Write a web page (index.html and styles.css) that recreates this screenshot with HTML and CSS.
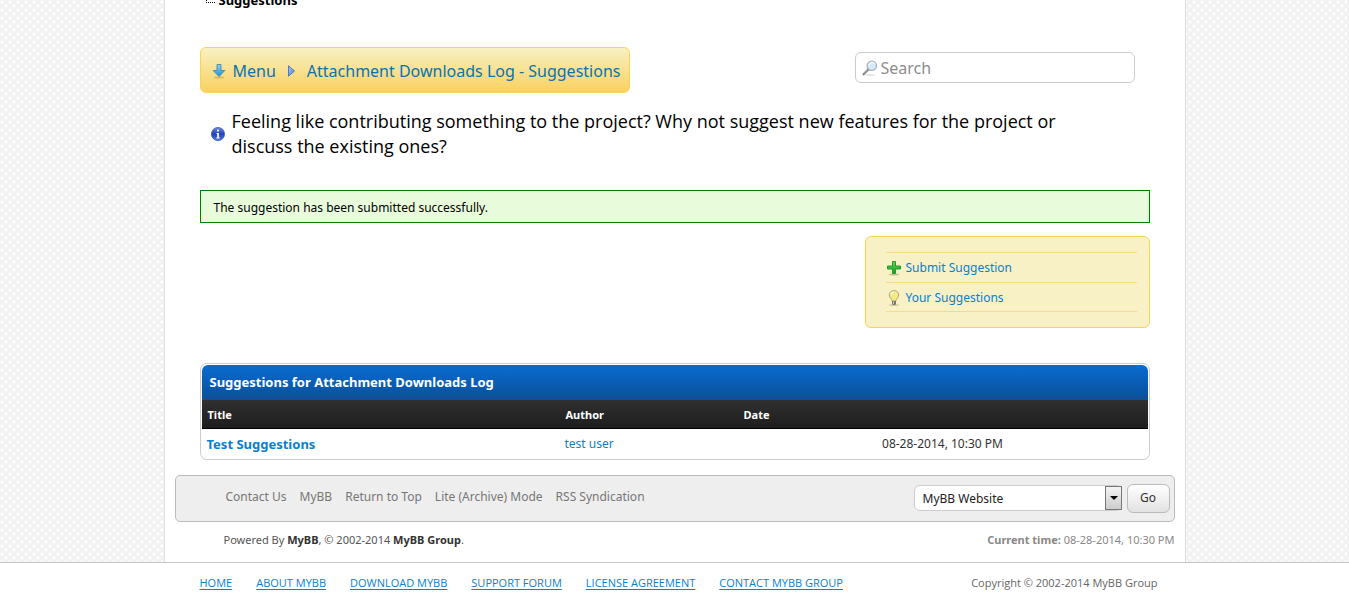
FILE: index.html
```html
<!DOCTYPE html>
<html lang="en">
<head>
<meta charset="utf-8">
<meta name="viewport" content="width=device-width, initial-scale=1">
<title>Attachment Downloads Log - Suggestions</title>
<link rel="stylesheet" href="styles.css">
</head>
<body>
<div class="backdrop">
  <div class="page">
    <main class="content">
      <div class="trail"><span class="trail-tick"></span><strong>Suggestions</strong></div>

      <div class="toolbar">
        <nav class="crumbs" aria-label="Project">
          <a class="crumb" href="#">
            <svg class="crumb-arrow" viewBox="0 0 14 16" aria-hidden="true">
              <defs><linearGradient id="down" x1="0" y1="0" x2="0" y2="1"><stop offset="0" stop-color="#8fd3f0"/><stop offset="1" stop-color="#1593e6"/></linearGradient></defs>
              <ellipse cx="7" cy="14.500" rx="5" ry="1" fill="#b98f36" opacity=".5"/>
              <path d="M5 1.500h4v6h3.800L7 13.500 1.200 7.500H5z" fill="url(#down)" stroke="#4787ad" stroke-width=".9"/>
            </svg>
            Menu</a>
          <svg class="crumb-sep" viewBox="0 0 8 12" aria-hidden="true">
            <defs><linearGradient id="next" x1="0" y1="0" x2="1" y2="1"><stop offset="0" stop-color="#b9cdf0"/><stop offset="1" stop-color="#3f78dd"/></linearGradient></defs>
            <path d="M1 .8 7 6 1 11.200z" fill="url(#next)" stroke="#5377bd"/>
          </svg>
          <a class="crumb" href="#">Attachment Downloads Log - Suggestions</a>
        </nav>
        <form class="search">
          <svg class="search-icon" viewBox="0 0 16 16" aria-hidden="true">
            <ellipse cx="8" cy="15" rx="6" ry=".8" fill="#ddd"/>
            <path d="M6.200 9.500 1.500 14.200" stroke="#777" stroke-width="2" stroke-linecap="round"/>
            <path d="M5.800 9.500 1.800 13.500" stroke="#ccc" stroke-width=".8"/>
            <circle cx="9.800" cy="5.700" r="4.700" fill="#d8eafa" stroke="#a6aeb5" stroke-width="1.200"/>
            <path d="M7 5.500a3 3 0 0 1 5-2" fill="none" stroke="#fff"/>
          </svg>
          <input class="search-input" type="search" placeholder="Search" aria-label="Search">
        </form>
      </div>

      <div class="intro">
        <svg class="intro-icon" viewBox="0 0 16 16" aria-hidden="true">
          <defs><linearGradient id="info" x1="0" y1="0" x2="0" y2="1"><stop offset="0" stop-color="#6c8ae4"/><stop offset=".5" stop-color="#2342bb"/><stop offset="1" stop-color="#4f7be6"/></linearGradient></defs>
          <circle cx="8" cy="8" r="6.600" fill="url(#info)" stroke="#4a60b8" stroke-width=".8"/>
          <circle cx="8" cy="4.600" r="1.100" fill="#fff"/>
          <path d="M6.500 7h2.400v4.500h.8v1H6.400v-1h.8V8h-.7z" fill="#fff"/>
        </svg>
        <p class="intro-text">Feeling like contributing something to the project? Why not suggest new features for the project or discuss the existing ones?</p>
      </div>

      <div class="notice" role="status">The suggestion has been submitted successfully.</div>

      <ul class="actions">
        <li class="action">
          <svg class="action-icon" viewBox="0 0 16 16" aria-hidden="true">
            <defs><linearGradient id="plus" x1="0" y1="0" x2="0" y2="1"><stop offset="0" stop-color="#5fda5b"/><stop offset="1" stop-color="#169c24"/></linearGradient></defs>
            <ellipse cx="8" cy="14.500" rx="5" ry="1" fill="#c4bd94"/>
            <path d="M6.500 1.500h3v4.500h5v3h-5v4.500h-3V9h-5V6h5z" fill="url(#plus)" stroke="#219a2b"/>
          </svg>
          <a class="link" href="#">Submit Suggestion</a>
        </li>
        <li class="action">
          <svg class="action-icon" viewBox="0 0 16 16" aria-hidden="true">
            <ellipse cx="8" cy="15" rx="5" ry=".8" fill="#c4bd94"/>
            <path d="M6.200 11C6 8.800 3.300 7.800 3.300 4.900a4.700 4.300 0 0 1 9.400 0C12.700 7.800 10 8.800 9.800 11z" fill="#f3ec86" stroke="#b7a077"/>
            <path d="M5 4.500C5.200 3 6.300 2 8 2" fill="none" stroke="#fff" stroke-width="1.200"/>
            <path d="M6 11h4v3L9 15H7l-1-1z" fill="#777"/><path d="M7 11.500h1V14H7z" fill="#ccc"/>
          </svg>
          <a class="link" href="#">Your Suggestions</a>
        </li>
      </ul>

      <div class="panel">
        <table class="list">
          <caption class="list-title">Suggestions for Attachment Downloads Log</caption>
          <thead>
            <tr><th class="col-title" scope="col">Title</th><th class="col-author" scope="col">Author</th><th scope="col">Date</th></tr>
          </thead>
          <tbody>
            <tr><td><a class="link link-strong" href="#">Test Suggestions</a></td><td><a class="link" href="#">test user</a></td><td class="date">08-28-2014, 10:30 PM</td></tr>
          </tbody>
        </table>
      </div>
    </main>

    <footer class="board-footer">
      <div class="footbar">
        <nav class="foot-links" aria-label="Board">
          <a href="#">Contact Us</a><a href="#">MyBB</a><a href="#">Return to Top</a><a href="#">Lite (Archive) Mode</a><a href="#">RSS Syndication</a>
        </nav>
        <form class="theme">
          <span class="select-box">
            <select class="theme-select" aria-label="Theme"><option>MyBB Website</option></select>
            <span class="select-arrow"></span>
          </span>
          <button class="go" type="button">Go</button>
        </form>
      </div>
      <div class="meta">
        <span>Powered By <strong>MyBB</strong>, © 2002-2014 <strong>MyBB Group</strong>.</span>
        <span class="clock"><strong>Current time:</strong> 08-28-2014, 10:30 PM</span>
      </div>
    </footer>
  </div>
</div>
<footer class="site-footer">
  <div class="site-inner">
    <nav class="site-links" aria-label="Site">
      <a href="#">HOME</a><a href="#">ABOUT MYBB</a><a href="#">DOWNLOAD MYBB</a><a href="#">SUPPORT FORUM</a><a href="#">LICENSE AGREEMENT</a><a href="#">CONTACT MYBB GROUP</a>
    </nav>
    <span>Copyright © 2002-2014 MyBB Group</span>
  </div>
</footer>
</body>
</html>
```

FILE: styles.css
```css
* { box-sizing: border-box; }

body {
  margin: 0;
  background: #fff;
  color: #333;
  font: 12px/18px Tahoma, "Noto Sans", sans-serif;
}

.backdrop {
  background-color: #f2f2f2;
  background-image:
    radial-gradient(circle at 2px 2px, #fff 1px, transparent 2px),
    radial-gradient(circle at 6px 6px, #fff 1px, transparent 2px);
  background-size: 8px 8px;
  border-bottom: 1px solid #c6c6c6;
}

.page {
  max-width: 1022px;
  margin: 0 auto;
  padding: 0 10px 13px;
  background: #fff;
  border: solid #dcdcdc;
  border-width: 0 1px;
}

.content { padding: 0 25px; }

.link { color: #0a7fcf; text-decoration: none; }
.link-strong { font-size: 13px; font-weight: bold; }

.trail {
  display: flex;
  gap: 4px;
  height: 47px;
  padding-left: 6px;
  color: #000;
  font-size: 13px;
  line-height: 0;
}
.trail-tick { width: 9px; height: 3px; border: dotted #000; border-width: 0 0 1px 1px; }

.toolbar {
  display: flex;
  align-items: center;
  justify-content: space-between;
  padding-right: 15px;
}
.crumbs {
  display: flex;
  align-items: center;
  gap: 11px;
  height: 46px;
  padding: 2px 9px 0 11px;
  border: 1px solid #fbd15e;
  border-radius: 6px;
  background: linear-gradient(#f7f1c2, #fad160);
  font-size: 16px;
}
.crumb { display: flex; align-items: center; gap: 7px; color: #0a73b0; text-decoration: none; }
.crumb-arrow { width: 14px; height: 16px; }
.crumb-sep { width: 9px; height: 12px; }

.search {
  display: flex;
  align-items: center;
  gap: 3px;
  width: 280px;
  height: 31px;
  margin-bottom: 5px;
  padding: 0 6px;
  border: 1px solid #ccc;
  border-radius: 6px;
}
.search-icon { flex: none; width: 16px; height: 16px; }
.search-input { flex: 1; min-width: 0; padding: 0; border: 0; outline: 0; background: none; color: #333; font: 16px/24px Tahoma, "Noto Sans", sans-serif; }
.search-input::placeholder { color: #8d8d8d; opacity: 1; }

.intro { display: flex; align-items: center; gap: 6px; padding: 16px 10px 0; }
.intro-icon { flex: none; width: 16px; height: 16px; }
.intro-text { max-width: 860px; margin: 0; color: #000; font: 18px/25px "Open Sans", sans-serif; }

.notice { margin-top: 31px; padding: 8px 13px 5px; border: 1px solid #008000; background: #e8fcdc; color: #000; }

.actions {
  width: 285px;
  margin: 13px 0 0 auto;
  padding: 15px 12px 15px 20px;
  border: 1px solid #fbd15e;
  border-radius: 6px;
  background: #f7f1c5;
  list-style: none;
}
.action { display: flex; align-items: center; gap: 4px; height: 29px; padding-top: 1px; border-bottom: 1px solid #f5dd83; }
.action:first-child { height: 31px; border-top: 1px solid #f5dd83; }
.action-icon { width: 16px; height: 16px; }

.panel { margin-top: 35px; padding: 1px; border: 1px solid #ccc; border-radius: 7px; }
.list { width: 100%; border-collapse: collapse; table-layout: fixed; }
.list-title {
  padding: 8px;
  border-radius: 6px 6px 0 0;
  background: linear-gradient(#0a6cd0, #0a509a);
  color: #fff;
  font-size: 13px;
  font-weight: bold;
  text-align: left;
}
.list thead { background: linear-gradient(#303030, #1d1d1d); }
.list th { height: 29px; padding: 1px 6px 0; border-top: 1px solid #444; border-bottom: 1px solid #000; color: #fff; font-size: 11px; text-align: left; }
.list td { height: 29px; padding: 2px 5px 0; }
.list .date { text-align: center; }
.col-title { width: 358px; }
.col-author { width: 178px; }

.footbar {
  display: flex;
  align-items: center;
  justify-content: space-between;
  margin-top: 15px;
  height: 47px;
  padding: 0 4px 0 50px;
  border: 1px solid #bbb;
  border-radius: 5px;
  background: #eee;
}
.foot-links { display: flex; gap: 13px; padding-bottom: 3px; }
.foot-links a { color: #777; text-decoration: none; }
.theme { display: flex; align-items: center; gap: 5px; }
.select-box { position: relative; display: flex; }
.theme-select { width: 208px; height: 26px; padding: 1px 8px 0; border: 1px solid #ccc; border-radius: 6px; background: #fff; appearance: none; color: #222; font: 12px/18px Tahoma, "Noto Sans", sans-serif; }
.select-arrow { position: absolute; top: 1px; right: 0; width: 17px; height: 24px; border: 1px solid #777; background: linear-gradient(#f4f4f4, #ccc); pointer-events: none; }
.select-arrow::after { content: ""; position: absolute; top: 9px; left: 4px; border: solid transparent; border-width: 4px 4px 0; border-top-color: #000; }
.go { width: 43px; height: 29px; padding: 0; border: 1px solid #bbb; border-radius: 6px; background: linear-gradient(#fff, #e2e2e2); color: #333; font: 12px/18px Tahoma, "Noto Sans", sans-serif; }

.meta { display: flex; justify-content: space-between; padding: 9px 0 0 49px; color: #555; font-size: 11px; }
.meta strong { color: #333; }
.meta .clock, .meta .clock strong { color: #888; }

.site-inner { display: flex; justify-content: space-between; max-width: 950px; margin: 0 auto; padding: 11px 0; color: #666; font: 11px/18px "Open Sans", sans-serif; }
.site-inner { padding-right: 0; }
.site-links { display: flex; gap: 24px; }
.site-links a { color: #0a7fcf; text-underline-offset: 2px; }
.site-links + span { margin-right: -8px; }
```
